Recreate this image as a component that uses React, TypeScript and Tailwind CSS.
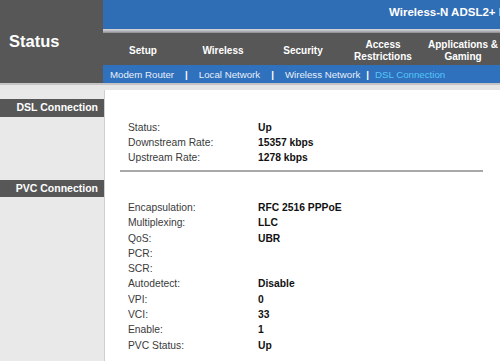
import React from "react";

const dsl = [
  ["Status:", "Up"],
  ["Downstream Rate:", "15357 kbps"],
  ["Upstream Rate:", "1278 kbps"],
];

const pvc = [
  ["Encapsulation:", "RFC 2516 PPPoE"],
  ["Multiplexing:", "LLC"],
  ["QoS:", "UBR"],
  ["PCR:", ""],
  ["SCR:", ""],
  ["Autodetect:", "Disable"],
  ["VPI:", "0"],
  ["VCI:", "33"],
  ["Enable:", "1"],
  ["PVC Status:", "Up"],
];

function Rows({ rows, lh }: { rows: string[][]; lh: string }) {
  return (
    <div className="flex flex-col">
      {rows.map(([k, v]) => (
        <div key={k} className={`flex ${lh} text-[10.3px]`}>
          <div className="w-[130px] text-[#3a3a3a]">{k}</div>
          <div className="font-bold text-[#111]">{v}</div>
        </div>
      ))}
    </div>
  );
}

export default function App() {
  const tabs: React.ReactNode[] = [
    "Setup",
    "Wireless",
    "Security",
    <>Access<br />Restrictions</>,
    <>Applications &amp;<br />Gaming</>,
  ];
  return (
    <div
      className="w-[500px] h-[361px] overflow-hidden bg-white flex flex-col"
      style={{ fontFamily: '"Liberation Sans", Arial, sans-serif' }}
    >
      {/* Header */}
      <div className="flex h-[83px] shrink-0">
        <div className="w-[103px] shrink-0 bg-[#575757] pl-[9px] pt-[32px]">
          <div className="text-white font-bold text-[16.5px] leading-[18px]">Status</div>
        </div>
        <div className="flex-1 flex flex-col min-w-0 overflow-hidden">
          <div className="h-[29px] bg-[#2f6db5] flex items-center pl-[286px] whitespace-nowrap overflow-hidden">
            <span className="text-white font-bold text-[11.5px] leading-none -mt-[3px]">
              Wireless-N ADSL2+ Modem Router
            </span>
          </div>
          <div className="h-[4px] bg-gradient-to-b from-[#d6d6dc] via-[#b8b8c0] to-[#8a8a8e]" />
          <div className="h-[32px] bg-[#575757] flex items-center pt-[3px] whitespace-nowrap">
            {tabs.map((t, i) => (
              <div
                key={i}
                className="w-[80px] shrink-0 text-center text-white font-bold text-[10px] leading-[12px]"
              >
                {t}
              </div>
            ))}
          </div>
          <div className="h-[18px] bg-[#2f71bd] flex items-center pt-[2px] pl-[7px] text-[9.7px] text-[#e8f0fa] whitespace-nowrap">
            <span>Modem Router</span>
            <span className="mx-[11px] font-bold text-white">|</span>
            <span>Local Network</span>
            <span className="mx-[11px] font-bold text-white">|</span>
            <span>Wireless Network</span>
            <span className="mx-[6px] font-bold text-white">|</span>
            <span className="text-[#55c6f7]">DSL Connection</span>
          </div>
        </div>
      </div>

      {/* separator band */}
      <div className="h-[7px] shrink-0 bg-[#e6e6e6] border-t-2 border-[#c4c4c4]" />

      {/* Body */}
      <div className="flex flex-1 min-h-0">
        <div className="w-[104px] shrink-0 bg-[#e9e9e9] flex flex-col">
          <div className="mt-[9px] h-[18px] bg-[#575757] flex items-center justify-end pr-[6px] text-white font-bold text-[10.5px]">
            DSL Connection
          </div>
          <div className="mt-[63px] h-[17px] bg-[#575757] flex items-center justify-end pr-[6px] text-white font-bold text-[10.5px]">
            PVC Connection
          </div>
        </div>
        <div className="flex-1 bg-white border-l border-[#d0d0d0] flex flex-col">
          <div className="pt-[30px] pl-[23px]">
            <Rows rows={dsl} lh="h-[15px] leading-[15px]" />
          </div>
          <div className="mt-[5px] ml-[15px] w-[363px] h-[2px] bg-[#a8a8a8]" />
          <div className="pt-[28px] pl-[23px]">
            <Rows rows={pvc} lh="h-[15.3px] leading-[15.3px]" />
          </div>
        </div>
      </div>
    </div>
  );
}
